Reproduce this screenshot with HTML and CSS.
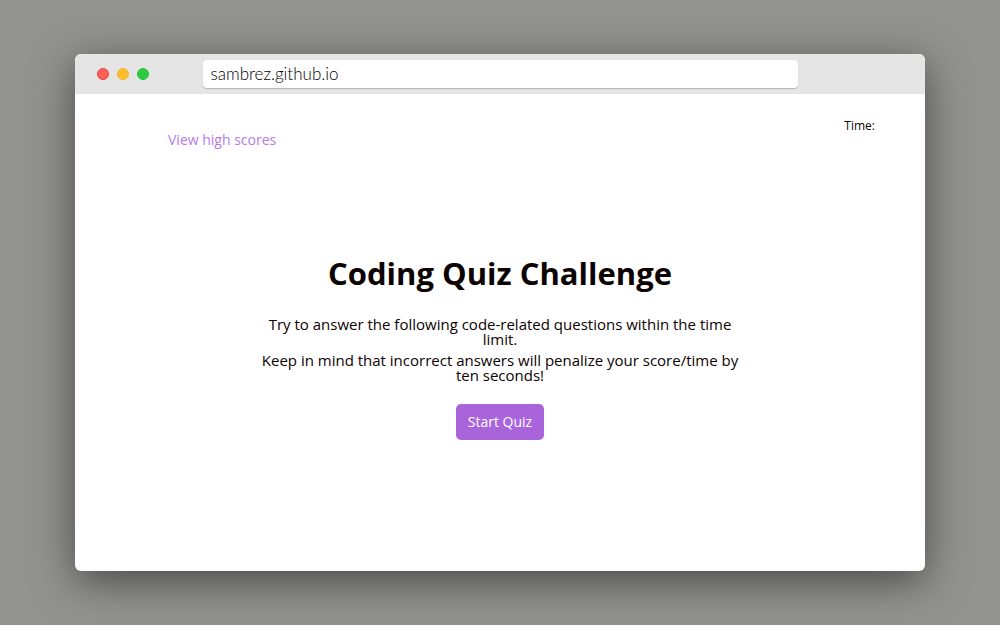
FILE: index.html
```html
<!DOCTYPE html>
<html lang="en">
<head>
<meta charset="utf-8">
<meta name="viewport" content="width=device-width, initial-scale=1">
<title>Coding Quiz Challenge</title>
<link rel="stylesheet" href="styles.css">
</head>
<body>
<div class="browser">
  <header class="toolbar">
    <div class="lights">
      <span class="light light-close"></span>
      <span class="light light-minimize"></span>
      <span class="light light-expand"></span>
    </div>
    <input class="address" type="text" value="sambrez.github.io" aria-label="Address">
  </header>
  <div class="page">
    <nav class="topbar">
      <a class="scores" href="#">View high scores</a>
      <span class="timer">Time:</span>
    </nav>
    <main class="quiz">
      <h1 class="title">Coding Quiz Challenge</h1>
      <p class="intro">Try to answer the following code-related questions within the time limit.</p>
      <p class="intro">Keep in mind that incorrect answers will penalize your score/time by ten seconds!</p>
      <button class="start" type="button">Start Quiz</button>
    </main>
  </div>
</div>
</body>
</html>
```
FILE: styles.css
```css
* {
  box-sizing: border-box;
}

body {
  display: flex;
  min-height: 100vh;
  margin: 0;
  padding: 54px 7.5%;
  background: #929290;
  color: #0c0202;
  font-family: "Open Sans", sans-serif;
}

.browser {
  display: flex;
  flex: 1;
  flex-direction: column;
  overflow: hidden;
  border-radius: 6px;
  background: #fff;
  box-shadow: 0 10px 40px rgba(0, 0, 0, 0.5);
}

.toolbar {
  display: grid;
  grid-template-columns: 15% 70% 15%;
  align-items: center;
  height: 40px;
  background: #e5e5e5;
}

.lights {
  display: flex;
  gap: 8px;
  padding-left: 22px;
}

.light {
  width: 12px;
  height: 12px;
  border: 1px solid;
  border-radius: 50%;
}

.light-close {
  border-color: #e2463f;
  background: #ff6158;
}

.light-minimize {
  border-color: #f6b42b;
  background: #ffbd2e;
}

.light-expand {
  border-color: #2bc13c;
  background: #2ecb41;
}

.address {
  height: 28px;
  padding: 0 8px 2px;
  border: 0;
  border-radius: 4px;
  background: #fff;
  box-shadow: 0 1px 1px #b0b5b2;
  color: #000;
  font: 300 17px "Lato", sans-serif;
}

.page {
  flex: 1;
  padding: 24px 50px;
}

.topbar {
  display: flex;
  justify-content: space-between;
  padding-left: 43px;
}

.scores {
  margin-top: 14px;
  color: #b87be6;
  font-size: 14px;
  line-height: 15px;
  text-decoration: none;
}

.timer {
  font-size: 12px;
  line-height: 15px;
}

.quiz {
  display: flex;
  flex-direction: column;
  align-items: center;
  max-width: 480px;
  margin: 108px auto 0;
  text-align: center;
}

.title {
  margin: 0 0 26px;
  font-size: 31px;
  font-weight: 700;
  line-height: 36px;
}

.intro {
  margin: 0 0 6px;
  font-size: 15px;
  line-height: 15px;
}

.start {
  margin-top: 15px;
  padding: 10px 12px;
  border: 0;
  border-radius: 5px;
  background: #a964dc;
  color: #fff;
  font: 14px/16px "Open Sans", sans-serif;
}
```
